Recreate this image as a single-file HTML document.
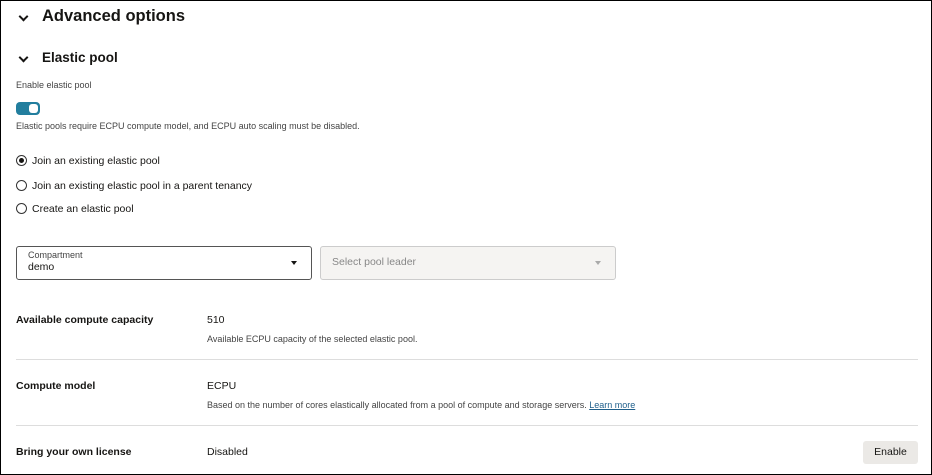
<!DOCTYPE html><html><head><style>
body{margin:0;width:932px;height:475px;overflow:hidden;font-family:"Liberation Sans",sans-serif;color:#161513;background:#fff}
.frame{position:absolute;left:0;top:0;width:930px;height:473px;border:1px solid #000}
.a{position:absolute;white-space:nowrap}
.chev{position:absolute;width:5px;height:5px;border-right:2px solid #161513;border-bottom:2px solid #161513;transform:rotate(45deg)}
.sm{font-size:9px;color:#444}
.rad{position:absolute;width:9px;height:9px;border:1px solid #333;border-radius:50%}
.lbl{font-size:10.5px;font-weight:bold}
.val{font-size:10.5px}
.hr{position:absolute;left:16px;width:902px;height:1px;background:#ddd}
</style></head><body><div class="frame"></div>
<div class="chev" style="left:20px;top:13px"></div>
<div class="a" style="left:42px;top:7px;font-size:16.5px;font-weight:bold">Advanced options</div>
<div class="chev" style="left:20px;top:54px"></div>
<div class="a" style="left:42px;top:50px;font-size:13.5px;font-weight:bold">Elastic pool</div>
<div class="a sm" style="left:16px;top:80px">Enable elastic pool</div>
<div class="a" style="left:16px;top:102px;width:24px;height:13px;border-radius:4px;background:#227e9e"><div style="position:absolute;right:2px;top:2px;width:9px;height:9px;border-radius:3px;background:#fff"></div></div>
<div class="a sm" style="left:16px;top:121px">Elastic pools require ECPU compute model, and ECPU auto scaling must be disabled.</div>
<div class="rad" style="left:16px;top:155px"><div style="position:absolute;left:2px;top:2px;width:5px;height:5px;border-radius:50%;background:#161513"></div></div>
<div class="a val" style="left:32px;top:155px">Join an existing elastic pool</div>
<div class="rad" style="left:16px;top:180px"></div>
<div class="a val" style="left:32px;top:180px">Join an existing elastic pool in a parent tenancy</div>
<div class="rad" style="left:16px;top:203px"></div>
<div class="a val" style="left:32px;top:203px">Create an elastic pool</div>
<div class="a" style="left:16px;top:246px;width:294px;height:32px;border:1px solid #555;border-radius:3px"></div>
<div class="a sm" style="left:28px;top:250px">Compartment</div>
<div class="a val" style="left:28px;top:261px">demo</div>
<div class="a" style="left:291px;top:261px;border-left:3px solid transparent;border-right:3px solid transparent;border-top:4px solid #161513"></div>
<div class="a" style="left:320px;top:246px;width:294px;height:32px;border:1px solid #ccc;border-radius:3px;background:#f5f4f2"></div>
<div class="a val" style="left:332px;top:256px;color:#888">Select pool leader</div>
<div class="a" style="left:595px;top:261px;border-left:3px solid transparent;border-right:3px solid transparent;border-top:4px solid #aaa"></div>
<div class="a lbl" style="left:16px;top:314px">Available compute capacity</div>
<div class="a val" style="left:207px;top:314px">510</div>
<div class="a sm" style="left:207px;top:334px">Available ECPU capacity of the selected elastic pool.</div>
<div class="hr" style="top:359px"></div>
<div class="a lbl" style="left:16px;top:380px">Compute model</div>
<div class="a val" style="left:207px;top:380px">ECPU</div>
<div class="a sm" style="left:207px;top:400px">Based on the number of cores elastically allocated from a pool of compute and storage servers. <span style="color:#1f5f8b;text-decoration:underline">Learn more</span></div>
<div class="hr" style="top:425px"></div>
<div class="a lbl" style="left:16px;top:446px">Bring your own license</div>
<div class="a val" style="left:207px;top:446px">Disabled</div>
<div class="a" style="left:863px;top:441px;width:55px;height:23px;border-radius:3px;background:#ebe9e6;font-size:10.5px;line-height:23px;text-align:center">Enable</div>
</body></html>
